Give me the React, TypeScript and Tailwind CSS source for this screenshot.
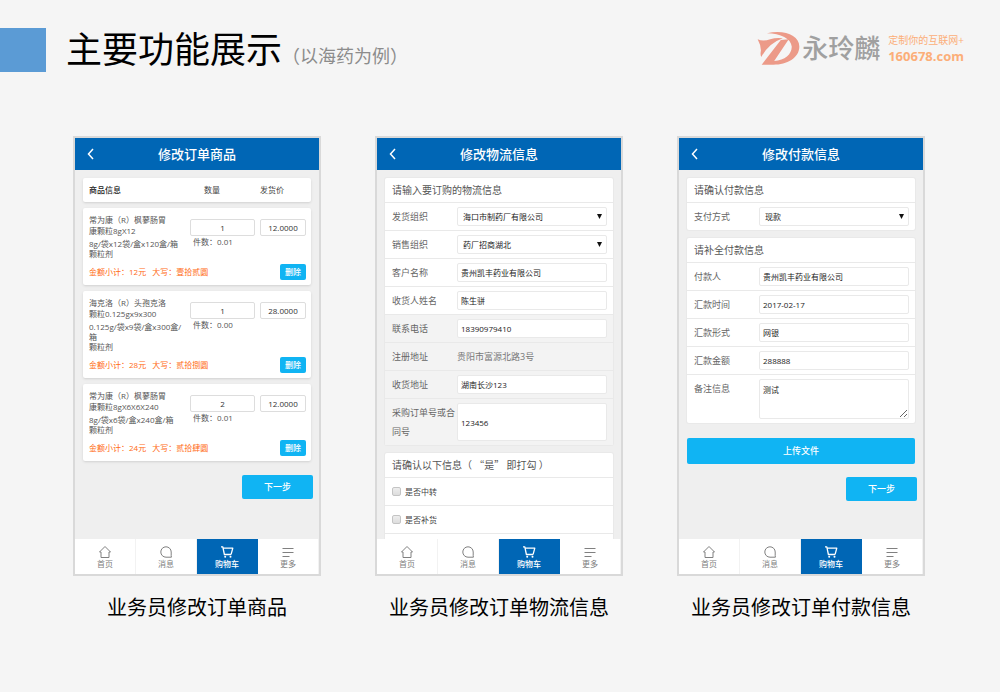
import { useId } from "react";
import type { ReactNode } from "react";
import clsx from "clsx";

const products = [
  {
    name: ["常为康（R）枫蓼肠胃", "康颗粒8gX12"],
    spec: ["8g/袋x12袋/盒x120盒/箱", "颗粒剂"],
    qty: "1",
    price: "12.0000",
    pieces: "0.01",
    total: "12元",
    capital: "壹拾贰圆",
  },
  {
    name: ["海克洛（R）头孢克洛", "颗粒0.125gx9x300"],
    spec: ["0.125g/袋x9袋/盒x300盒/", "箱", "颗粒剂"],
    qty: "1",
    price: "28.0000",
    pieces: "0.00",
    total: "28元",
    capital: "贰拾捌圆",
  },
  {
    name: ["常为康（R）枫蓼肠胃", "康颗粒8gX6X6X240"],
    spec: ["8g/袋x6袋/盒x240盒/箱", "颗粒剂"],
    qty: "2",
    price: "12.0000",
    pieces: "0.01",
    total: "24元",
    capital: "贰拾肆圆",
  },
];

const HomeIcon = () => (
  <svg viewBox="0 0 14 14" className="w-3.5 h-3.5" fill="none" stroke="currentColor" strokeLinejoin="round">
    <path d="M7 1.5 12.5 7H11v5.5H3V7H1.5Z" />
  </svg>
);

const MessageIcon = () => (
  <svg viewBox="0 0 14 14" className="w-3.5 h-3.5" fill="none" stroke="currentColor" strokeLinejoin="round">
    <path d="M12.4 12.2H7A5.2 5.2 0 1 1 12.2 7v3.6Z" />
  </svg>
);

const CartIcon = () => (
  <svg viewBox="0 0 14 14" className="w-3.5 h-3.5" fill="none" stroke="currentColor" strokeWidth="1.3" strokeLinejoin="round">
    <path d="M1 1.8h1.8l1.6 7.7h6.8M3.4 3.2h9.4l-1.7 6.2" />
    <circle cx="5.2" cy="11.7" r="1" fill="currentColor" stroke="none" />
    <circle cx="10.5" cy="11.7" r="1" fill="currentColor" stroke="none" />
  </svg>
);

const MoreIcon = () => (
  <svg viewBox="0 0 14 14" className="w-3.5 h-3.5" fill="none" stroke="currentColor">
    <path d="M1.5 3.5h11M1.5 7.5h11M1.5 11.5h7" />
  </svg>
);

const tabs = [
  { label: "首页", icon: <HomeIcon /> },
  { label: "消息", icon: <MessageIcon /> },
  { label: "购物车", icon: <CartIcon />, active: true },
  { label: "更多", icon: <MoreIcon /> },
];

const Logo = () => (
  <svg viewBox="10 14 130 104" className="w-[43px] h-[35px]" fill="#ec9a88">
    <path d="M40 20C92 8 138 26 138 60C138 95 100 115 60 115H24L82 40L106 38L62 104C95 102 116 82 115 60C113 36 82 21 40 20Z" />
    <path d="M12 38Q28 46 50 38Q68 32 88 35Q45 50 23 92Q19 84 22 72Q21 54 12 38Z" />
  </svg>
);

const Phone = ({ title, children }: { title: string; children: ReactNode }) => (
  <div className="aspect-[31/55] overflow-hidden flex flex-col border-2 border-[#d9d9d9] bg-[#efefef]">
    <header className="shrink-0 grid grid-cols-[32px_1fr_32px] items-center h-8 bg-[#0066b5] text-white">
      <button type="button" aria-label="返回" className="flex justify-center">
        <svg viewBox="0 0 12 12" className="w-3 h-3" fill="none" stroke="currentColor" strokeWidth="1.5">
          <path d="M8 1 3.5 6 8 11" />
        </svg>
      </button>
      <h3 className="text-center text-[13px] leading-5 font-medium">{title}</h3>
    </header>
    <main className="flex-1 min-h-0 overflow-hidden px-2 pt-2">{children}</main>
    <nav className="shrink-0 grid grid-cols-4 h-[35px] bg-white">
      {tabs.map((tab) => (
        <a
          key={tab.label}
          href="#"
          className={clsx(
            "flex flex-col items-center justify-center border-r text-[8px] leading-[10px]",
            tab.active
              ? "bg-[#0066b5] border-[#0066b5] text-white font-medium"
              : "border-[#f2f2f2] text-[#808080]"
          )}
        >
          {tab.icon}
          <span>{tab.label}</span>
        </a>
      ))}
    </nav>
  </div>
);

const Section = ({ title, children }: { title: string; children: ReactNode }) => (
  <section className="mb-2 rounded-xs bg-white ring-1 ring-[#e9e9e9]">
    <h4 className="h-6 px-[7px] font-['Noto_Sans_CJK_SC',sans-serif] text-[10px] leading-6 text-[#555]">
      {title}
    </h4>
    {children}
  </section>
);

const box = "w-full rounded-xs border border-[#e9e9e9] bg-white text-[8px] text-[#222]";

type FieldProps = {
  label: string;
  value: string;
  kind?: "input" | "select" | "text" | "textarea";
  muted?: boolean;
  tall?: boolean;
};

const Field = ({ label, value, kind = "input", muted, tall }: FieldProps) => {
  const id = useId();
  return (
    <div
      className={clsx(
        "flex border-t border-[#e9e9e9] pl-[7px] pr-1.5 py-1",
        muted && "bg-[#f3f3f3]"
      )}
    >
      <label htmlFor={id} className="w-[65px] shrink-0 text-[9px] leading-[19px] text-[#666]">
        {label}
      </label>
      <div className="relative flex-1 flex">
        {kind === "input" && (
          <input id={id} defaultValue={value} className={clsx(box, "px-[3px]", tall ? "h-[38px]" : "h-[19px]")} />
        )}
        {kind === "select" && (
          <>
            <select id={id} defaultValue={value} className={clsx(box, "h-[19px] pl-[5px] pr-4 appearance-none")}>
              <option>{value}</option>
            </select>
            <svg viewBox="0 0 5 5" className="absolute right-[5px] top-[7px] w-[5px] h-[5px] pointer-events-none">
              <path d="M0 0H5L2.5 5Z" fill="#111" />
            </svg>
          </>
        )}
        {kind === "textarea" && (
          <textarea id={id} defaultValue={value} className={clsx(box, "h-10 px-[3px] py-1 leading-3 resize-y")} />
        )}
        {kind === "text" && (
          <output id={id} className="text-[9px] leading-[19px] text-[#777]">
            {value}
          </output>
        )}
      </div>
    </div>
  );
};

const CheckRow = ({ label }: { label: string }) => (
  <label className="flex items-center gap-1 h-7 px-[7px] border-t border-[#e9e9e9] text-[8px] text-[#444]">
    <input
      type="checkbox"
      className="appearance-none w-[9px] h-[9px] rounded-xs border border-[#c4c4c4] bg-gradient-to-b from-[#eee] to-[#ddd] checked:bg-[#0066b5]"
    />
    {label}
  </label>
);

const NextButton = () => (
  <div className="flex justify-end -mr-0.5">
    <button type="button" className="w-[71px] h-6 rounded-xs bg-[#10b4f3] text-[9px] font-medium text-white">
      下一步
    </button>
  </div>
);

const ProductsScreen = () => (
  <Phone title="修改订单商品">
    <div className="flex items-center gap-[5px] h-6 pl-1.5 pr-[5px] mb-1.5 rounded-xs bg-white shadow-sm text-[8px] text-[#444]">
      <span className="flex-1 font-medium text-[#222]">商品信息</span>
      <span className="w-[65px] pl-3.5">数量</span>
      <span className="w-[46px]">发货价</span>
    </div>
    {products.map((item, index) => (
      <article
        key={index}
        className="mb-1.5 pt-1.5 pb-[5px] pl-1.5 pr-[5px] rounded-xs bg-white shadow-sm text-[8px] text-[#555]"
      >
        <div className="flex gap-[5px] items-start">
          <div className="flex-1 w-0 whitespace-nowrap">
            {item.name.map((line) => (
              <p key={line} className="leading-[11px]">{line}</p>
            ))}
            <div className="mt-[3px]">
              {item.spec.map((line) => (
                <p key={line} className="leading-[10px]">{line}</p>
              ))}
            </div>
          </div>
          <div className="w-[65px] pt-[5px]">
            <input
              aria-label="数量"
              defaultValue={item.qty}
              className="block w-full h-[17px] rounded-xs border border-[#ddd] text-center text-[#333]"
            />
            <p className="pl-[3px] leading-3">件数：{item.pieces}</p>
          </div>
          <div className="w-[46px] pt-[5px]">
            <input
              aria-label="发货价"
              defaultValue={item.price}
              className="block w-full h-[17px] rounded-xs border border-[#ddd] text-center text-[#333]"
            />
          </div>
        </div>
        <div className="mt-[5px] flex items-center justify-between">
          <p className="flex gap-1.5 text-[#ff6a13]">
            <span>金额小计：{item.total}</span>
            <span>大写：{item.capital}</span>
          </p>
          <button type="button" className="w-[26px] h-4 rounded-xs bg-[#10b4f3] font-medium text-white">
            删除
          </button>
        </div>
      </article>
    ))}
    <div className="pt-2">
      <NextButton />
    </div>
  </Phone>
);

const LogisticsScreen = () => (
  <Phone title="修改物流信息">
    <Section title="请输入要订购的物流信息">
      <Field label="发货组织" value="海口市制药厂有限公司" kind="select" />
      <Field label="销售组织" value="药厂招商湖北" kind="select" />
      <Field label="客户名称" value="贵州凯丰药业有限公司" />
      <Field label="收货人姓名" value="陈生骈" />
      <Field label="联系电话" value="18390979410" muted />
      <Field label="注册地址" value="贵阳市富源北路3号" kind="text" muted />
      <Field label="收货地址" value="湖南长沙123" muted />
      <Field label="采购订单号或合同号" value="123456" muted tall />
    </Section>
    <Section title="请确认以下信息（ “是” 即打勾 ）">
      <CheckRow label="是否中转" />
      <CheckRow label="是否补货" />
      <div className="h-7 border-t border-[#e9e9e9]" />
    </Section>
  </Phone>
);

const PaymentScreen = () => (
  <Phone title="修改付款信息">
    <Section title="请确认付款信息">
      <Field label="支付方式" value="现款" kind="select" />
    </Section>
    <Section title="请补全付款信息">
      <Field label="付款人" value="贵州凯丰药业有限公司" />
      <Field label="汇款时间" value="2017-02-17" />
      <Field label="汇款形式" value="网银" />
      <Field label="汇款金额" value="288888" />
      <Field label="备注信息" value="测试" kind="textarea" />
    </Section>
    <button
      type="button"
      className="block w-full h-[26px] mt-[15px] mb-[13px] rounded-xs bg-[#10b4f3] text-[9px] font-medium text-white"
    >
      上传文件
    </button>
    <NextButton />
  </Phone>
);

const App = () => {
  const screens = [
    { caption: "业务员修改订单商品", screen: <ProductsScreen /> },
    { caption: "业务员修改订单物流信息", screen: <LogisticsScreen /> },
    { caption: "业务员修改订单付款信息", screen: <PaymentScreen /> },
  ];

  return (
    <div className="min-h-screen bg-[#f5f5f5] pt-7 font-['Open_Sans','Noto_Sans_CJK_SC',sans-serif]">
      {/* Title bar */}
      <header className="flex items-center h-11 pr-9">
        <div className="w-[46px] h-11 bg-[#5b9bd5]" />
        <h1 className="ml-5 text-4xl text-black">主要功能展示</h1>
        <span className="mt-3 text-lg leading-6 text-[#8c8c8c]">（以海药为例）</span>
        <div className="ml-auto -mt-1 flex items-center">
          <Logo />
          <span className="ml-0.5 text-[26px] leading-8 font-medium text-[#a0a0a0]">永玲麟</span>
          <div className="ml-2 text-[#fcae78]">
            <p className="text-[10px] leading-4">定制你的互联网+</p>
            <p className="text-[13px] leading-4 font-bold">160678.com</p>
          </div>
        </div>
      </header>

      {/* Screens */}
      <div className="mt-16 pl-[73px] pr-[75px] pb-10 grid grid-cols-3 gap-[54px]">
        {screens.map(({ caption, screen }) => (
          <figure key={caption}>
            {screen}
            <figcaption className="mt-[18px] text-center text-xl leading-7 text-black whitespace-nowrap">
              {caption}
            </figcaption>
          </figure>
        ))}
      </div>
    </div>
  );
};

export default App;
